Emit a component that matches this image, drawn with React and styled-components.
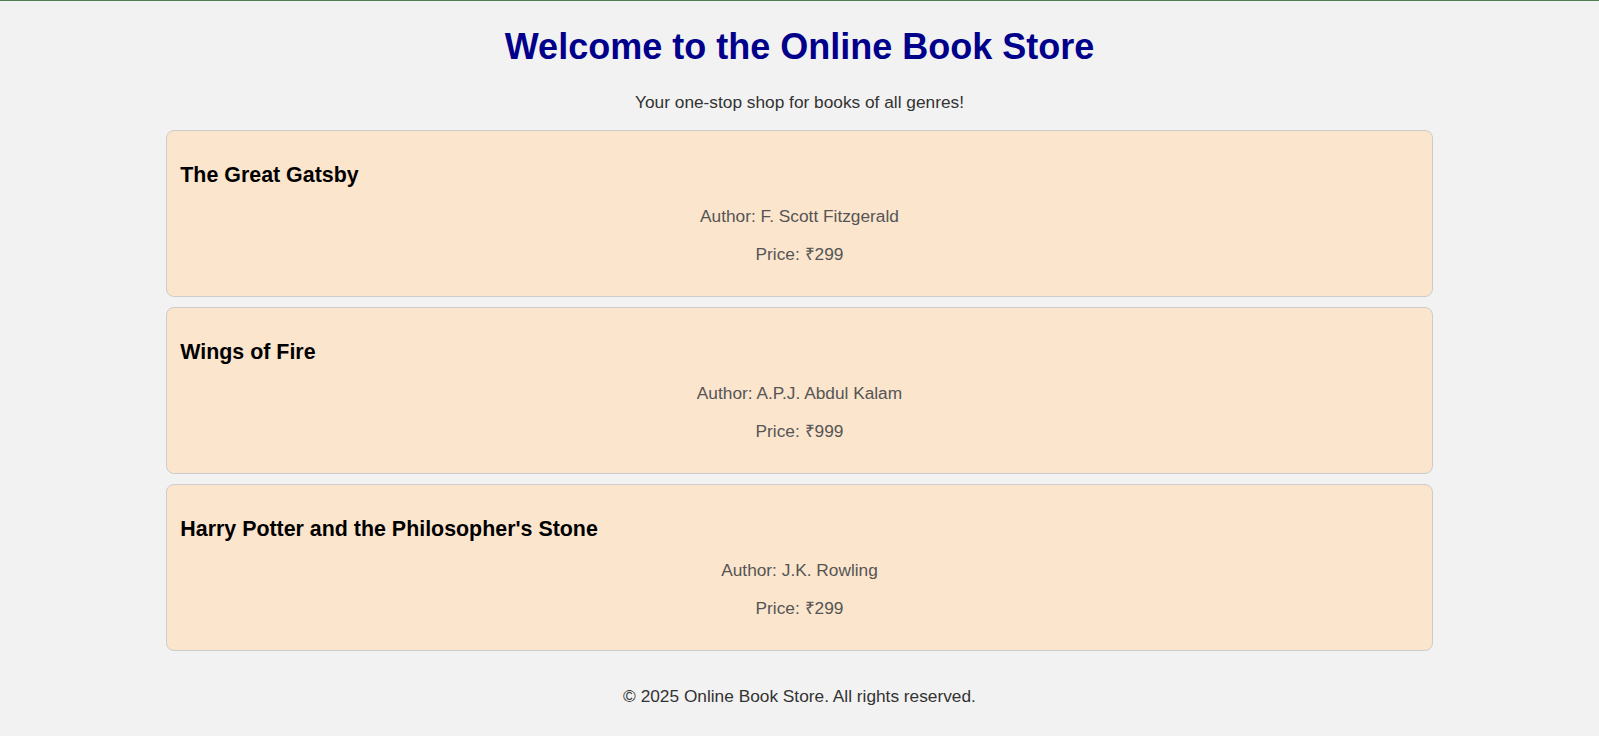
import React from 'react'
import styled, { createGlobalStyle } from 'styled-components'

const GlobalStyle = createGlobalStyle`
  html, body {
    margin: 0;
    padding: 0;
    background: #f2f2f2;
  }
  body {
    font-family: "Liberation Sans", Arial, sans-serif;
    color: #333;
  }
`

const books = [
  { title: 'The Great Gatsby', author: 'F. Scott Fitzgerald', price: 299 },
  { title: 'Wings of Fire', author: 'A.P.J. Abdul Kalam', price: 999 },
  { title: "Harry Potter and the Philosopher's Stone", author: 'J.K. Rowling', price: 299 },
]

const App = () => (
  <>
    <GlobalStyle />
    <Page>
      <Header>
        <Title>Welcome to the Online Book Store</Title>
        <Tagline>Your one-stop shop for books of all genres!</Tagline>
      </Header>
      <BookList>
        {books.map(book => (
          <BookCard key={book.title}>
            <BookTitle>{book.title}</BookTitle>
            <BookInfo>Author: {book.author}</BookInfo>
            <BookInfo>Price: ₹{book.price}</BookInfo>
          </BookCard>
        ))}
      </BookList>
      <Footer>© 2025 Online Book Store. All rights reserved.</Footer>
    </Page>
  </>
)

export default App

const Page = styled.div`
  border-top: 1px solid #4b7f52;
  padding: 0 8px 32px;
  min-height: 735px;
  box-sizing: border-box;
`

const Header = styled.header`
  text-align: center;
  padding-top: 24px;
`

const Title = styled.h1`
  margin: 0;
  font-size: 36px;
  line-height: 44px;
  font-weight: bold;
  color: #00008b;
`

const Tagline = styled.p`
  margin: 22px 0 0;
  font-size: 17.3px;
  line-height: 22px;
  color: #333;
`

const BookList = styled.main`
  display: flex;
  flex-direction: column;
  align-items: center;
  gap: 10px;
  margin-top: 17px;
`

const BookCard = styled.section`
  box-sizing: border-box;
  width: 80%;
  padding: 14px 13px 15px;
  background: #fce5cd;
  border: 1px solid #cccccc;
  border-radius: 8px;
  text-align: center;
`

const BookTitle = styled.h2`
  margin: 16px 0;
  font-size: 21.4px;
  line-height: 28px;
  font-weight: bold;
  color: #000;
  text-align: left;
`

const BookInfo = styled.p`
  margin: 16px 0;
  font-size: 17.3px;
  line-height: 22px;
  color: #555;
`

const Footer = styled.footer`
  margin-top: 34px;
  text-align: center;
  font-size: 17.3px;
  line-height: 22px;
  color: #333;
`
